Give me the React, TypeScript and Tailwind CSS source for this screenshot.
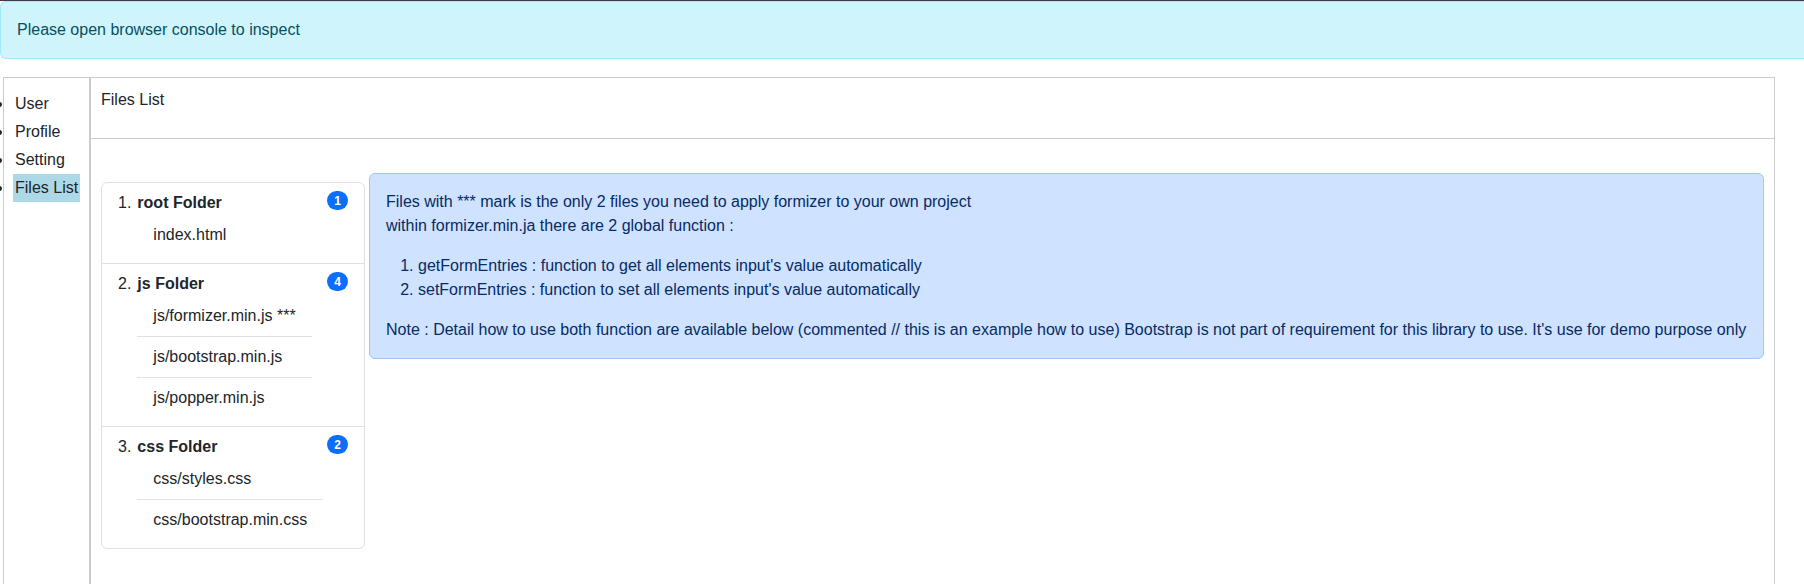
import React from 'react';

type Folder = {
  name: string;
  count: number;
  files: string[];
};

const FOLDERS: Folder[] = [
  { name: 'root Folder', count: 1, files: ['index.html'] },
  { name: 'js Folder', count: 4, files: ['js/formizer.min.js ***', 'js/bootstrap.min.js', 'js/popper.min.js'] },
  { name: 'css Folder', count: 2, files: ['css/styles.css', 'css/bootstrap.min.css'] },
];

const MENU = ['User', 'Profile', 'Setting', 'Files List'];

const FilesList: React.FC = () => (
  <ol className="mt-[9px] w-[264px] shrink-0 rounded-[6px] border border-[#dee2e6] bg-white">
    {FOLDERS.map((folder, i) => (
      <li
        key={folder.name}
        className={`flex items-start justify-between px-4 py-2 ${i < FOLDERS.length - 1 ? 'border-b border-[#dee2e6]' : ''}`}
      >
        <div className="flex items-start">
          <span>{i + 1}.</span>
          <div className="ml-[6px] mr-auto">
            <div className="font-bold">{folder.name}</div>
            <ul className="w-max">
              {folder.files.map((file, j) => (
                <li
                  key={file}
                  className={`px-4 py-2 ${j < folder.files.length - 1 ? 'border-b border-[#dee2e6]' : ''}`}
                >
                  {file}
                </li>
              ))}
            </ul>
          </div>
        </div>
        <span className="rounded-full bg-[#0d6efd] px-[7px] py-[3.5px] text-[12px] font-bold leading-[12px] text-white">
          {folder.count}
        </span>
      </li>
    ))}
  </ol>
);

export default function App() {
  return (
    <div className="h-[584px] overflow-hidden bg-white font-['Liberation_Sans',Arial,sans-serif] text-[16px] leading-6 text-[#212529]">
      <div className="h-px bg-[#3d3d3d]" />

      <div className="rounded-l-[6px] border border-r-0 border-[#9eeaf9] bg-[#cff4fc] p-4 text-[#055160]">
        Please open browser console to inspect
      </div>

      <div className="ml-[3px] mt-[18px] flex">
        <nav className="h-[520px] w-[87px] shrink-0 border-l border-r border-t border-[#ccc]">
          <ul className="list-disc pl-[9px] pt-3">
            {MENU.map((item) => (
              <li key={item}>
                <span
                  className={`inline-block px-[2px] py-[2px] ${item === 'Files List' ? 'bg-[#add8e6]' : ''}`}
                >
                  {item}
                </span>
              </li>
            ))}
          </ul>
        </nav>

        <section className="h-[520px] w-[1685px] shrink-0 border-l border-r border-t border-[#ccc]">
          <div className="h-[61px] border-b border-[#ccc] px-[10px] pt-[10px]">Files List</div>

          <div className="flex items-start px-[10px] pt-[34px]">
            <FilesList />

            <div className="ml-[4px] flex-1 rounded-[6px] border border-[#9ec5fe] bg-[#cfe2ff] p-4 text-[#052c65]">
              <div>
                Files with *** mark is the only 2 files you need to apply formizer to your own project
                <br />
                within formizer.min.ja there are 2 global function :
              </div>
              <ol className="my-4 list-decimal pl-8">
                <li>getFormEntries : function to get all elements input's value automatically</li>
                <li>setFormEntries : function to set all elements input's value automatically</li>
              </ol>
              <div className="whitespace-nowrap">
                Note : Detail how to use both function are available below (commented // this is an example how to use) Bootstrap is not part of requirement for this library to use. It's use for demo purpose only
              </div>
            </div>
          </div>
        </section>
      </div>
    </div>
  );
}
